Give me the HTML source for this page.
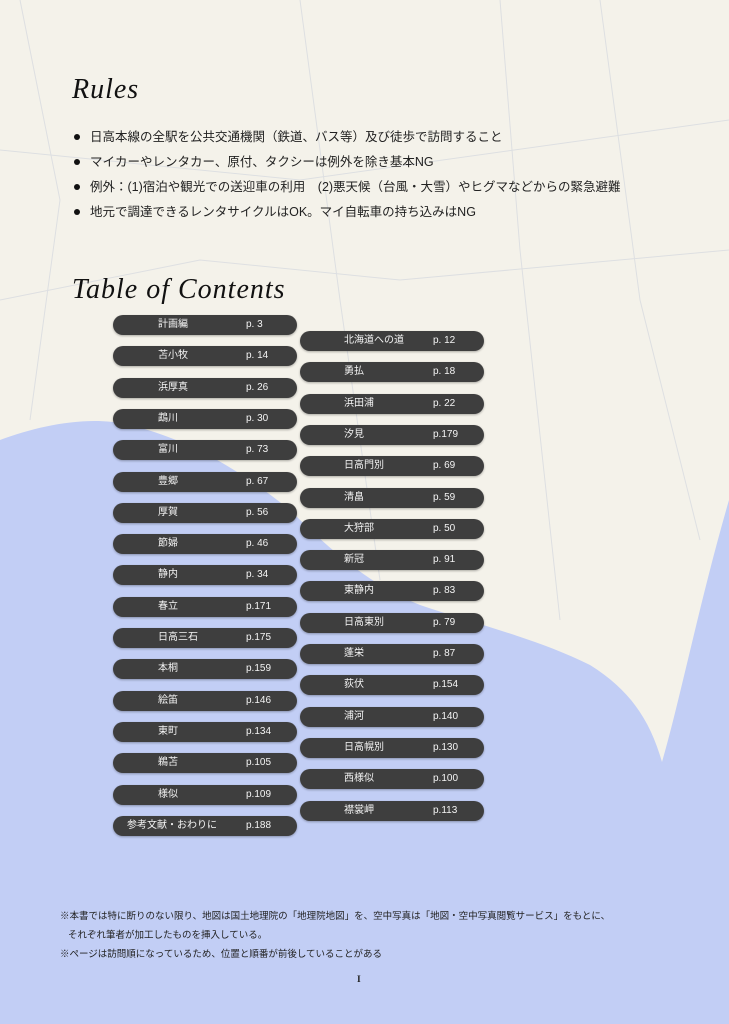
<!DOCTYPE html>
<html><head><meta charset="utf-8"><style>
body{margin:0;width:729px;height:1024px;position:relative;overflow:hidden;background:#f4f2ea;font-family:"Liberation Sans","Noto Sans CJK JP",sans-serif}
.t{position:absolute;font-family:"Liberation Serif",serif;font-style:italic;font-size:28px;color:#111;letter-spacing:1px}
ul{position:absolute;left:72px;top:127px;margin:0;padding:0;list-style:none;font-size:12.5px;color:#222}
li{height:25px;line-height:20px;position:relative;padding-left:18px}
li:before{content:"";position:absolute;left:2px;top:7px;width:6px;height:6px;border-radius:50%;background:#111}
.p{position:absolute;width:184px;height:20px;border-radius:10px;background:#3e3e3e;color:#f4f4f4;font-size:10px;line-height:20px;box-shadow:0 1px 2px rgba(0,0,0,.3)}
.p span{position:absolute;top:0}
.n{position:absolute;font-size:9.5px;color:#222}
</style></head><body>
<svg width="729" height="1024" style="position:absolute;left:0;top:0">
<path d="M0 440 C40 425 90 415 130 425 C190 440 240 470 290 510 C330 550 370 585 420 605 C480 625 540 640 590 665 C630 690 650 720 662 762 C680 700 700 600 729 500 L729 1024 L0 1024 Z" fill="#c2cef5"/>
<g stroke="#d8dbe0" stroke-width="1" fill="none" opacity=".8">
<path d="M20 0 L60 200 L30 420"/><path d="M300 0 L340 300 L380 580"/><path d="M500 0 L520 250 L560 620"/><path d="M600 0 L640 300 L700 540"/><path d="M0 300 L200 260 L400 280 L729 250"/><path d="M0 150 L300 180 L729 120"/>
</g></svg>
<div class="t" style="left:72px;top:74px">Rules</div>
<ul>
<li>日高本線の全駅を公共交通機関（鉄道、バス等）及び徒歩で訪問すること</li>
<li>マイカーやレンタカー、原付、タクシーは例外を除き基本NG</li>
<li>例外：(1)宿泊や観光での送迎車の利用　(2)悪天候（台風・大雪）やヒグマなどからの緊急避難</li>
<li>地元で調達できるレンタサイクルはOK。マイ自転車の持ち込みはNG</li>
</ul>
<div class="t" style="left:72px;top:274px">Table of Contents</div>
<div id="c"></div>
<div class="n" style="left:60px;top:908px">※本書では特に断りのない限り、地図は国土地理院の「地理院地図」を、空中写真は「地図・空中写真閲覧サービス」をもとに、</div>
<div class="n" style="left:68px;top:927px">それぞれ筆者が加工したものを挿入している。</div>
<div class="n" style="left:60px;top:946px">※ページは訪問順になっているため、位置と順番が前後していることがある</div>
<div class="n" style="left:357px;top:975px;font-family:'Liberation Serif',serif;font-weight:bold">I</div>
<script>
var L=[["計画編","p. 3"],["苫小牧","p. 14"],["浜厚真","p. 26"],["鵡川","p. 30"],["富川","p. 73"],["豊郷","p. 67"],["厚賀","p. 56"],["節婦","p. 46"],["静内","p. 34"],["春立","p.171"],["日高三石","p.175"],["本桐","p.159"],["絵笛","p.146"],["東町","p.134"],["鵜苫","p.105"],["様似","p.109"],["参考文献・おわりに","p.188"]];
var R=[["北海道への道","p. 12"],["勇払","p. 18"],["浜田浦","p. 22"],["汐見","p.179"],["日高門別","p. 69"],["清畠","p. 59"],["大狩部","p. 50"],["新冠","p. 91"],["東静内","p. 83"],["日高東別","p. 79"],["蓬栄","p. 87"],["荻伏","p.154"],["浦河","p.140"],["日高幌別","p.130"],["西様似","p.100"],["襟裳岬","p.113"]];
var h="";
L.forEach(function(a,i){var x=113,y=315+i*31.3;var nx=a[0].length>6?14:45;h+='<div class="p" style="left:'+x+'px;top:'+y+'px"><span style="left:'+nx+'px">'+a[0]+'</span><span style="left:133px">'+a[1]+'</span></div>';});
R.forEach(function(a,i){var x=300,y=331+i*31.3;h+='<div class="p" style="left:'+x+'px;top:'+y+'px"><span style="left:44px">'+a[0]+'</span><span style="left:133px">'+a[1]+'</span></div>';});
document.getElementById("c").innerHTML=h;
</script>
</body></html>
